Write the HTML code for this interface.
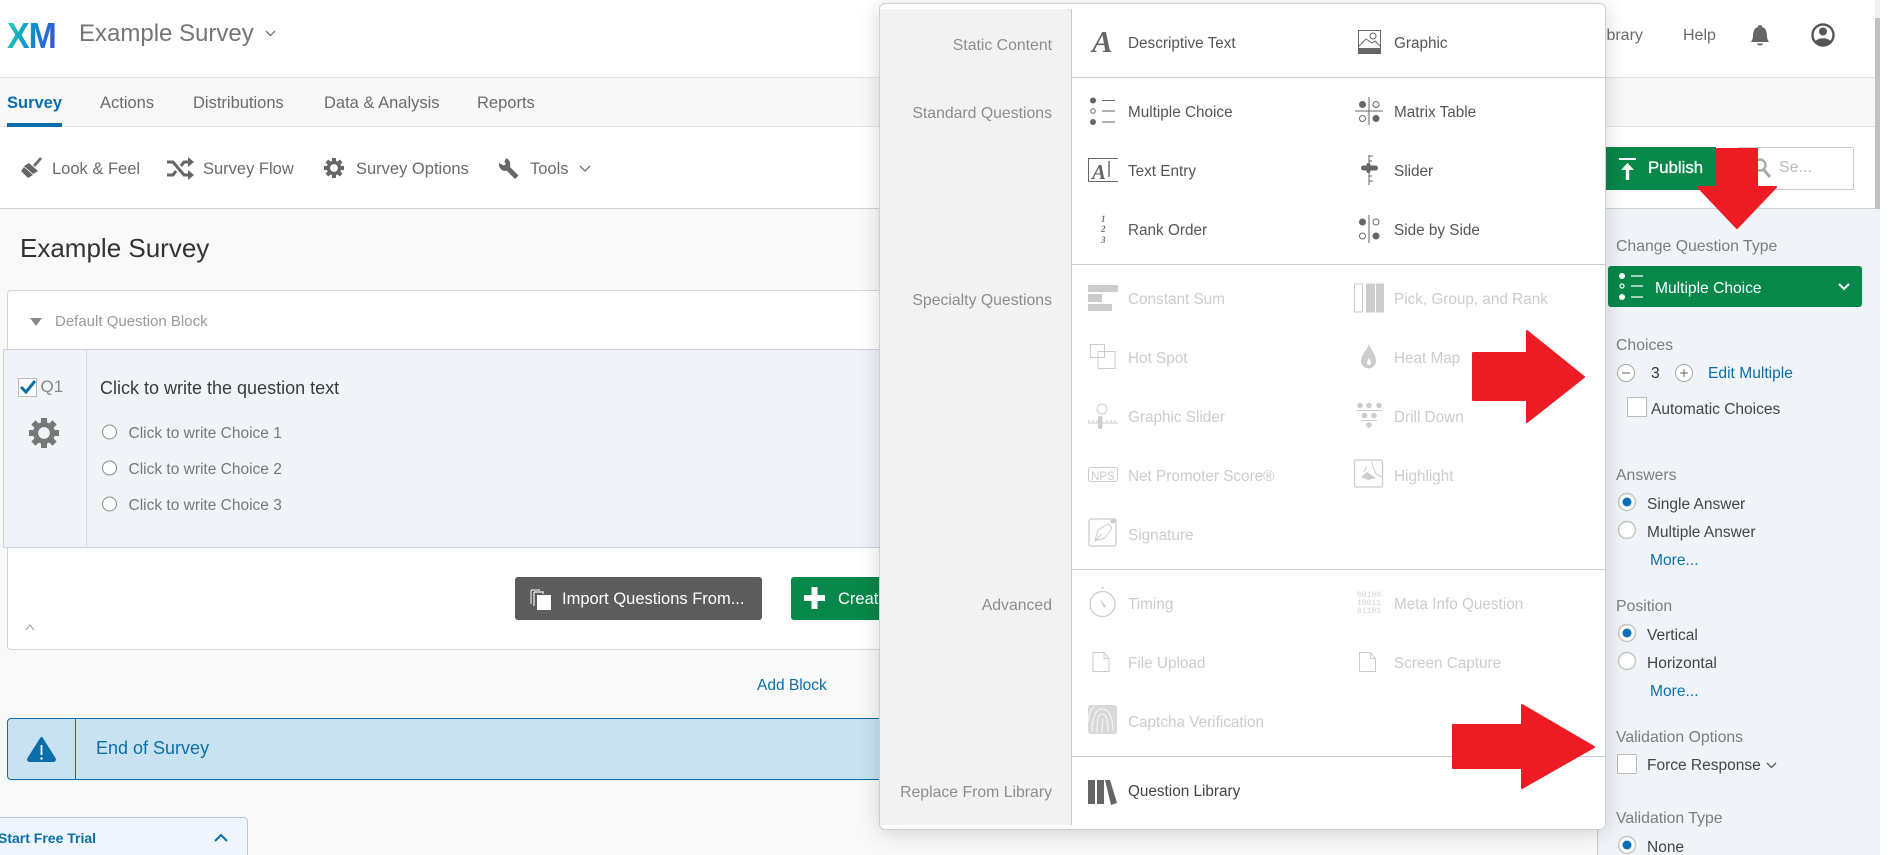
<!DOCTYPE html>
<html lang="en"><head><meta charset="utf-8"><title>Example Survey</title>
<style>
html,body{margin:0;padding:0;width:1891px;height:855px;overflow:hidden;background:#fff;font-family:"Liberation Sans",sans-serif}
#root{left:0;top:0;width:1891px;height:855px;overflow:hidden;background:#fff}
div{position:absolute;box-sizing:border-box}
.t{white-space:nowrap;line-height:24px;height:24px;margin-top:1px}
.z{margin-top:0}
.nav{font-size:16.5px;color:#6b6b6b}
.c{font-size:15.5px;color:#777}
.m{font-size:15.3px;color:#555}
.d{font-size:15.3px;color:#ccc}
.l{font-size:15.8px;color:#8c8c8c;right:839px;text-align:right}
.h{font-size:15.8px;color:#7c7c7c}
.o{font-size:15.5px;color:#444}
.a{font-size:15.6px;color:#0b6ea8}
svg{position:absolute;left:0;top:0}
</style></head><body>
<div id="root">

<div style="left:0;top:0;width:1875px;height:78px;background:#fff;border-bottom:1px solid #e3e3e3"></div>
<div style="left:0;top:78px;width:1875px;height:49px;background:#f8f8f8;border-bottom:1px solid #e3e3e3"></div>
<div style="left:7px;top:123px;width:55px;height:4px;background:#0b6ea8"></div>
<div style="left:0;top:127px;width:1875px;height:82px;background:#fff;border-bottom:1px solid #d0d0d0"></div>
<div style="left:0;top:209px;width:1597px;height:646px;background:#f9f9f9"></div>

<div class="t z" style="left:7px;top:15px;height:42px;line-height:42px;font-size:36px;font-weight:bold;letter-spacing:-1px;color:transparent;background:linear-gradient(105deg,#21d3b0 2%,#0a8fd0 50%,#3d4fd0 95%);-webkit-background-clip:text;background-clip:text;transform:scaleX(.94);transform-origin:left center">XM</div>
<div class="t" style="left:79px;top:21px;font-size:24px;color:#757575">Example Survey</div>

<div class="t" style="left:7px;top:90px;font-size:16.5px;font-weight:bold;color:#0b6ea8">Survey</div>
<div class="t nav" style="left:100px;top:90px">Actions</div>
<div class="t nav" style="left:193px;top:90px">Distributions</div>
<div class="t nav" style="left:324px;top:90px">Data &amp; Analysis</div>
<div class="t nav" style="left:477px;top:90px">Reports</div>

<div class="t nav" style="left:52px;top:156px">Look &amp; Feel</div>
<div class="t nav" style="left:203px;top:156px">Survey Flow</div>
<div class="t nav" style="left:356px;top:156px">Survey Options</div>
<div class="t nav" style="left:530px;top:156px">Tools</div>

<div class="t" style="left:20px;top:235px;font-size:26px;color:#333">Example Survey</div>

<div style="left:7px;top:290px;width:1000px;height:360px;background:#fff;border:1px solid #d6d6d6;border-radius:4px"></div>
<div class="t" style="left:55px;top:309px;font-size:15px;color:#9a9a9a">Default Question Block</div>
<div style="left:3px;top:349px;width:1000px;height:199px;background:#f0f4f8;border:1px solid #ccd2d8;border-right:0"></div>
<div style="left:86px;top:349px;width:1px;height:199px;background:#d5dbe0"></div>
<div style="left:18px;top:378px;width:19px;height:19px;background:#fff;border:1.5px solid #bbb"></div>
<div class="t z" style="left:40.500px;top:375px;font-size:17px;color:#888">Q1</div>
<div class="t z" style="left:100px;top:376px;font-size:18px;color:#3a3a3a">Click to write the question text</div>
<div class="t c z" style="left:128.500px;top:422px">Click to write Choice 1</div>
<div class="t c z" style="left:128.500px;top:458px">Click to write Choice 2</div>
<div class="t c z" style="left:128.500px;top:494px">Click to write Choice 3</div>

<div style="left:515px;top:577px;width:247px;height:43px;background:#5c5c5c;border-radius:3px"></div>
<div class="t" style="left:562px;top:586px;font-size:16.5px;color:#fff">Import Questions From...</div>
<div style="left:791px;top:577px;width:200px;height:43px;background:#07884a;border-radius:3px"></div>
<div class="t" style="left:838px;top:586px;font-size:16.5px;color:#fff">Create New Question</div>

<div class="t" style="left:757px;top:673px;font-size:15.5px;color:#0b6ea8">Add Block</div>
<div style="left:7px;top:718px;width:1000px;height:62px;background:#c9e2f2;border:1px solid #0b6ea8;border-radius:4px"></div>
<div style="left:75px;top:718px;width:1px;height:62px;background:#0b6ea8"></div>
<div class="t z" style="left:96px;top:736px;font-size:18px;color:#0b6ea8">End of Survey</div>

<div style="left:-4px;top:817px;width:252px;height:38px;background:#eef5fc;border:1px solid #b5c9d8;border-bottom:0;border-radius:4px 4px 0 0"></div>
<div class="t z" style="left:-2px;top:826px;font-size:14px;font-weight:bold;color:#0b6ea8">Start Free Trial</div>

<!-- right header -->
<div class="t" style="left:1594px;top:23px;font-size:16px;color:#6b6b6b">Library</div>
<div class="t" style="left:1683px;top:23px;font-size:16px;color:#6b6b6b">Help</div>

<!-- scrollbar -->
<div style="left:1875px;top:0;width:5px;height:855px;background:#f0f0f0"></div>
<div style="left:1875px;top:18px;width:5px;height:396px;background:#c1c1c1"></div>

<!-- right panel -->
<div style="left:1597px;top:209px;width:283px;height:646px;background:#f0f4f8;border-left:1px solid #ccc"></div>
<div style="left:1606px;top:147px;width:110px;height:43px;background:#07884a"></div>
<div class="t" style="left:1648px;top:155px;font-size:16.8px;-webkit-text-stroke:.3px #fff;color:#fff">Publish</div>
<div style="left:1737px;top:147px;width:117px;height:43px;background:#fff;border:1px solid #ccc;border-radius:2px"></div>
<div class="t" style="left:1779px;top:155px;font-size:16px;color:#bbb">Se...</div>

<div class="t h" style="left:1616px;top:234px">Change Question Type</div>
<div style="left:1608px;top:266px;width:254px;height:41px;background:#07884a;border-radius:3px"></div>
<div class="t" style="left:1655px;top:276px;font-size:15.6px;color:#fff">Multiple Choice</div>
<div class="t h" style="left:1616px;top:333px">Choices</div>
<div class="t" style="left:1651px;top:361px;font-size:15.6px;color:#333">3</div>
<div class="t a" style="left:1708px;top:361px">Edit Multiple</div>
<div style="left:1627px;top:397px;width:20px;height:20px;background:#fff;border:1px solid #bbb"></div>
<div class="t o" style="left:1651px;top:397px">Automatic Choices</div>

<div class="t h" style="left:1616px;top:463px">Answers</div>
<div class="t o" style="left:1647px;top:492px">Single Answer</div>
<div class="t o" style="left:1647px;top:520px">Multiple Answer</div>
<div class="t a" style="left:1650px;top:548px">More...</div>

<div class="t h" style="left:1616px;top:594px">Position</div>
<div class="t o" style="left:1647px;top:623px">Vertical</div>
<div class="t o" style="left:1647px;top:651px">Horizontal</div>
<div class="t a" style="left:1650px;top:679px">More...</div>

<div class="t h" style="left:1616px;top:725px">Validation Options</div>
<div style="left:1617px;top:754px;width:20px;height:20px;background:#fff;border:1px solid #bbb"></div>
<div class="t o" style="left:1647px;top:753px">Force Response</div>
<div class="t h" style="left:1616px;top:806px">Validation Type</div>
<div class="t o" style="left:1647px;top:835px">None</div>

<!-- icons under the modal -->
<svg width="1891" height="855" viewBox="0 0 1891 855" fill="none">
<path d="M266 31l4.500 4.500 4.500-4.500" stroke="#777" stroke-width="1.400"/>
<path d="M580 166l5 5 5-5" stroke="#777" stroke-width="1.400"/>
<!-- brush -->
<path d="M41 158l-7 8" stroke="#666" stroke-width="2.600"/>
<path d="M29 163l9 8-5 3-9-8z" fill="#666"/><path d="M24 167l9 8-5 3-7-7z" fill="#666"/>
<!-- flow -->
<path d="M167 162h6l11 13h6M167 175h6l3-4M181 166l3-4h6" stroke="#666" stroke-width="3"/>
<path d="M188 157l6 5-6 5zM188 170l6 5-6 5z" fill="#666"/>
<!-- gear -->
<g fill="#666" transform="translate(334 168)"><circle r="5.600" fill="none" stroke="#666" stroke-width="3.400"/><rect x="-2" y="-10" width="4" height="4"/><rect x="-2" y="6" width="4" height="4"/><rect x="-10" y="-2" width="4" height="4"/><rect x="6" y="-2" width="4" height="4"/><g transform="rotate(45)"><rect x="-2" y="-10" width="4" height="4"/><rect x="-2" y="6" width="4" height="4"/><rect x="-10" y="-2" width="4" height="4"/><rect x="6" y="-2" width="4" height="4"/></g></g>
<!-- wrench -->
<path d="M507 158c-1 1-2.500 2.500-2.500 4l1.500 2-2 1.500-1.500-.5-3.500-2c-.5 4 2 7.500 5.500 8l2-.5 8.500 8.500 3.500-3.500-8.500-8.500c1-4-.5-7.500-4-9z" fill="#666"/>
<!-- triangle + chevrons -->
<path d="M30 318h12l-6 8z" fill="#888"/>
<path d="M26 630l4-5 4 5" stroke="#aaa" stroke-width="1.200"/>
<path d="M215 841l6-6 6 6" stroke="#0b6ea8" stroke-width="2"/>
<!-- checkmark -->
<path d="M21 387l5 5 9-11" stroke="#0b6ea8" stroke-width="3"/>
<!-- q gear -->
<g fill="#777" transform="translate(44 433) scale(1.500)"><circle r="5.600" fill="none" stroke="#777" stroke-width="3.400"/><rect x="-2" y="-10" width="4" height="4"/><rect x="-2" y="6" width="4" height="4"/><rect x="-10" y="-2" width="4" height="4"/><rect x="6" y="-2" width="4" height="4"/><g transform="rotate(45)"><rect x="-2" y="-10" width="4" height="4"/><rect x="-2" y="6" width="4" height="4"/><rect x="-10" y="-2" width="4" height="4"/><rect x="6" y="-2" width="4" height="4"/></g></g>
<!-- q radios -->
<g stroke="#888" fill="#fff"><circle cx="109.500" cy="432" r="7"/><circle cx="109.500" cy="468" r="7"/><circle cx="109.500" cy="504" r="7"/></g>
<!-- import -->
<path d="M531 590h9M531 590v14" stroke="#ccc" stroke-width="1.400"/>
<path d="M534 592h9v2M534 592v14" stroke="#ddd" stroke-width="1.400"/>
<rect x="537" y="595" width="14" height="15" fill="#fff"/>
<!-- plus -->
<path d="M814.500 587v22M804 598h21" stroke="#fff" stroke-width="6"/>
<!-- warning -->
<path d="M41.500 737c1 0 1.500 1 2 2l12 19c1 2 0 4-2 4h-24c-2 0-3-2-2-4l12-19c.5-1 1-2 2-2z" fill="#0b6ea8"/>
<path d="M41.500 745v10" stroke="#fff" stroke-width="1.800"/><circle cx="41.500" cy="758.500" r="1.200" fill="#fff"/>
<!-- bell -->
<path d="M1760 25a2 2 0 0 1 2 2c4 1 5 5 5 9 0 3 1 4 2 6h-18c1-2 2-3 2-6 0-4 1-8 5-9a2 2 0 0 1 2-2z" fill="#666"/><path d="M1757 43.500a3 2 0 0 0 6 0z" fill="#666"/>
<!-- user -->
<circle cx="1823" cy="35" r="10.500" stroke="#555" stroke-width="2.400"/><circle cx="1823" cy="31.500" r="4" fill="#555"/><path d="M1815 42c2-5 14-5 16 0-4 4-12 4-16 0z" fill="#555"/>
<!-- publish -->
<path d="M1619 159h17" stroke="#fff" stroke-width="2"/><path d="M1627.500 180v-15" stroke="#fff" stroke-width="3.400"/><path d="M1621 170l6.500-7 6.500 7z" fill="#fff"/>
<!-- search -->
<circle cx="1760" cy="165" r="5.500" stroke="#aaa" stroke-width="2.400"/><path d="M1764 170l6 7" stroke="#aaa" stroke-width="3"/>
<!-- dropdown icon -->
<g fill="#fff"><circle cx="1622" cy="276" r="3"/><circle cx="1622" cy="286" r="2" fill="none" stroke="#fff" stroke-width="1.200"/><circle cx="1622" cy="297" r="3"/></g>
<path d="M1631 276h12M1631 286h12M1631 297h12" stroke="#fff" stroke-width="1.200"/>
<path d="M1839 284l5 5 5-5" stroke="#fff" stroke-width="2"/>
<!-- stepper -->
<g stroke="#aaa" fill="#fff"><circle cx="1626" cy="373" r="8.500"/><circle cx="1684" cy="373" r="8.500"/></g>
<path d="M1622 373h8M1680 373h8M1684 369v8" stroke="#666"/>
<!-- panel radios -->
<g fill="#fff" stroke="#c4c4c4" stroke-width="1.400"><circle cx="1627" cy="502" r="8.500"/><circle cx="1627" cy="530" r="8.500"/><circle cx="1627" cy="633" r="8.500"/><circle cx="1627" cy="661" r="8.500"/><circle cx="1627" cy="845" r="8.500"/></g>
<g fill="#0b6fb5"><circle cx="1627" cy="502" r="4.500"/><circle cx="1627" cy="633" r="4.500"/><circle cx="1627" cy="845" r="4.500"/></g>
<path d="M1767 763l4.500 4.500 4.500-4.500" stroke="#555" stroke-width="1.300"/>
</svg>

<!-- modal -->
<div style="left:879px;top:3px;width:727px;height:827px;background:#fff;border:1px solid #cfcfcf;border-radius:6px;box-shadow:0 3px 22px rgba(0,0,0,.16)"></div>
<div style="left:880px;top:9px;width:192px;height:816px;background:#f2f2f2;border-right:1px solid #c8c8c8"></div>
<div style="left:1072px;top:77px;width:533px;height:1px;background:#ccc"></div>
<div style="left:1072px;top:264px;width:533px;height:1px;background:#ccc"></div>
<div style="left:1072px;top:569px;width:533px;height:1px;background:#ccc"></div>
<div style="left:1072px;top:756px;width:533px;height:1px;background:#ccc"></div>

<div class="t l" style="top:33px">Static Content</div>
<div class="t l" style="top:101px">Standard Questions</div>
<div class="t l" style="top:288px">Specialty Questions</div>
<div class="t l" style="top:593px">Advanced</div>
<div class="t l" style="top:780px">Replace From Library</div>

<div class="t m" style="left:1128px;top:31px">Descriptive Text</div>
<div class="t m" style="left:1394px;top:31px">Graphic</div>
<div class="t m" style="left:1128px;top:100px">Multiple Choice</div>
<div class="t m" style="left:1394px;top:100px">Matrix Table</div>
<div class="t m" style="left:1128px;top:159px">Text Entry</div>
<div class="t m" style="left:1394px;top:159px">Slider</div>
<div class="t m" style="left:1128px;top:218px">Rank Order</div>
<div class="t m" style="left:1394px;top:218px">Side by Side</div>
<div class="t d" style="left:1128px;top:287px">Constant Sum</div>
<div class="t d" style="left:1394px;top:287px">Pick, Group, and Rank</div>
<div class="t d" style="left:1128px;top:346px">Hot Spot</div>
<div class="t d" style="left:1394px;top:346px">Heat Map</div>
<div class="t d" style="left:1128px;top:405px">Graphic Slider</div>
<div class="t d" style="left:1394px;top:405px">Drill Down</div>
<div class="t d" style="left:1128px;top:464px">Net Promoter Score®</div>
<div class="t d" style="left:1394px;top:464px">Highlight</div>
<div class="t d" style="left:1128px;top:523px">Signature</div>
<div class="t d" style="left:1128px;top:592px">Timing</div>
<div class="t d" style="left:1394px;top:592px">Meta Info Question</div>
<div class="t d" style="left:1128px;top:651px">File Upload</div>
<div class="t d" style="left:1394px;top:651px">Screen Capture</div>
<div class="t d" style="left:1128px;top:710px">Captcha Verification</div>
<div class="t m" style="left:1128px;top:779px;color:#444">Question Library</div>

<div class="t" style="left:1092px;top:26px;height:30px;line-height:30px;font-family:'Liberation Serif',serif;font-weight:bold;font-style:italic;font-size:31px;color:#666">A</div>
<div class="t" style="left:1092px;top:156px;height:30px;line-height:30px;font-family:'Liberation Serif',serif;font-weight:bold;font-style:italic;font-size:21px;color:#666">A</div>
<div class="t" style="left:1101px;top:211px;width:10px;height:14px;line-height:14px;font-family:'Liberation Serif',serif;font-style:italic;font-weight:bold;font-size:9px;color:#777">1</div>
<div class="t" style="left:1101px;top:221px;width:10px;height:14px;line-height:14px;font-family:'Liberation Serif',serif;font-style:italic;font-weight:bold;font-size:9px;color:#777">2</div>
<div class="t" style="left:1101px;top:232px;width:10px;height:14px;line-height:14px;font-family:'Liberation Serif',serif;font-style:italic;font-weight:bold;font-size:9px;color:#777">3</div>
<div class="t" style="left:1091px;top:467px;width:36px;height:18px;line-height:18px;font-size:11.500px;color:#ccc">NPS</div>
<div class="t" style="left:1357px;top:590px;height:10px;line-height:10px;font-family:'Liberation Mono',monospace;font-size:8px;color:#d2d2d2">00100</div>
<div class="t" style="left:1357px;top:598px;height:10px;line-height:10px;font-family:'Liberation Mono',monospace;font-size:8px;color:#d2d2d2">10011</div>
<div class="t" style="left:1357px;top:606px;height:10px;line-height:10px;font-family:'Liberation Mono',monospace;font-size:8px;color:#d2d2d2">01101</div>

<svg width="1891" height="855" viewBox="0 0 1891 855" fill="none">
<!-- graphic -->
<rect x="1358.500" y="30.500" width="22" height="22" stroke="#666"/><rect x="1358" y="48" width="23" height="6" fill="#666"/>
<path d="M1359 46l7-7 6 4 3-2 5 5" stroke="#666"/><circle cx="1373" cy="36" r="3" stroke="#666"/>
<!-- MC -->
<g fill="#666"><circle cx="1093" cy="100.500" r="3"/><circle cx="1093" cy="122" r="3"/></g><circle cx="1093" cy="111" r="2.200" stroke="#666"/>
<path d="M1102 100.500h13M1102 111h13M1102 122h13" stroke="#666"/>
<!-- matrix -->
<path d="M1369 97v28M1355 111h28" stroke="#666"/><circle cx="1362.500" cy="104.500" r="3.500" fill="#666"/><circle cx="1376" cy="104.500" r="3" stroke="#666"/><circle cx="1362.500" cy="118.500" r="3" stroke="#666"/><circle cx="1376" cy="118.500" r="3.500" fill="#666"/>
<!-- text entry -->
<path d="M1118 158.500h-29.500v23h29.500" stroke="#666"/><path d="M1109 161v16" stroke="#666" stroke-width="1.400"/>
<!-- slider -->
<path d="M1369 155v30M1369 156h4M1369 161h3M1369 176h3M1369 181h4" stroke="#666"/><rect x="1361" y="165.500" width="17" height="5" rx="2.500" fill="#666"/><rect x="1366.500" y="163" width="4" height="10" rx="2" fill="#666"/>
<!-- side by side -->
<path d="M1369 215v28" stroke="#666"/><circle cx="1362.500" cy="222" r="3.500" fill="#666"/><circle cx="1376" cy="222" r="3" stroke="#666"/><circle cx="1362.500" cy="236" r="3" stroke="#666"/><circle cx="1376" cy="236" r="3.500" fill="#666"/>
<!-- constant sum -->
<g fill="#ccc"><rect x="1088" y="285" width="30" height="7"/><rect x="1088" y="294" width="14" height="8"/><rect x="1088" y="304" width="24" height="7"/></g>
<!-- pick group -->
<rect x="1354.500" y="284" width="8" height="28" stroke="#ccc"/><rect x="1366" y="283.500" width="9" height="29" fill="#ccc"/><rect x="1376" y="283.500" width="8" height="29" fill="#ccc"/>
<!-- hot spot -->
<path d="M1090.500 344.500h14v13h-14zM1098 351.500h17v17h-17z" stroke="#ccc"/>
<!-- heat map -->
<path d="M1369 344c2 6 7 11 7 17a7.500 7.500 0 0 1-15 0c0-6 6-11 8-17z" fill="#ccc"/><path d="M1369 358c1 2 2 3 2 5a2 2 0 0 1-4 0c0-2 1-3 2-5z" fill="#fff"/>
<!-- graphic slider -->
<circle cx="1102" cy="409" r="5" stroke="#ccc"/><path d="M1088 423h30" stroke="#ccc"/><path d="M1089 420v3M1093 420v3M1097 420v3M1107 420v3M1111 420v3M1115 420v3" stroke="#ccc"/><rect x="1098" y="416" width="4.500" height="13" rx="2" fill="#ccc"/>
<!-- drill down -->
<g fill="#ccc"><circle cx="1360" cy="405.500" r="2.800"/><circle cx="1369" cy="405.500" r="2.800"/><circle cx="1379" cy="405.500" r="2.800"/><circle cx="1364.500" cy="415.500" r="2.800"/><circle cx="1374" cy="415.500" r="2.800"/><circle cx="1369" cy="425" r="2.800"/></g><path d="M1356 410.500h26M1361 420.500h16" stroke="#ccc"/>
<!-- NPS -->
<rect x="1088.500" y="467.500" width="29" height="14" rx="2" stroke="#ccc"/>
<!-- highlight -->
<rect x="1354.500" y="460" width="28" height="27" rx="2" stroke="#ccc" stroke-width="1.300"/><path d="M1361 477l6-5 9 6-8 2z" fill="#ccc"/><path d="M1367 466l-3 6M1372 462c0 5 3 9 4 12l6 3" stroke="#ccc"/>
<!-- signature -->
<rect x="1089" y="519" width="27" height="27" rx="2" stroke="#ccc" stroke-width="1.300"/><path d="M1095 541l3-11 10-6 4 4-7 10z M1095 541l7-7" stroke="#ccc"/><circle cx="1113" cy="521" r="2.500" fill="#ccc"/>
<!-- timing -->
<circle cx="1102.500" cy="604" r="12.500" stroke="#ccc" stroke-width="1.300"/><path d="M1102.500 589v-2" stroke="#ccc" stroke-width="2"/><path d="M1100 599l6 7-2 2z" fill="#ccc"/>
<!-- files -->
<path d="M1093 652.500h11l5 6v13h-16zM1104 652.500v6h5" stroke="#ccc"/>
<path d="M1359.500 652.500h11l5 6v13h-16zM1370.500 652.500v6h5" stroke="#ccc"/>
<!-- captcha -->
<rect x="1088" y="705" width="29" height="29" rx="3" fill="#d8d8d8"/>
<path d="M1092 732c0-10 2-23 10-23s11 11 11 21M1097 733c0-9 0-19 5-19s6 8 6 18M1088 722c1-8 3-14 7-16M1102 733c0-5 0-11 1-14" stroke="#f2f2f2" stroke-width="1.300"/>
<!-- library -->
<g fill="#666"><rect x="1088" y="780" width="7" height="24"/><rect x="1097" y="780" width="7" height="24"/><path d="M1105 780h5l7 23-6 2z"/></g>
<!-- red arrows -->
<g fill="#ed1c24" stroke="#ed1c24" stroke-width="2" stroke-linejoin="round">
<path d="M1473 353h54v-22l57 46-57 45v-22h-54z"/>
<path d="M1453 725h69v-20l72 42-72 41v-20h-69z"/>
<path d="M1717 149h40v38h19l-39 41-39-41h19z"/>
</g>
</svg>
</div>
</body></html>
